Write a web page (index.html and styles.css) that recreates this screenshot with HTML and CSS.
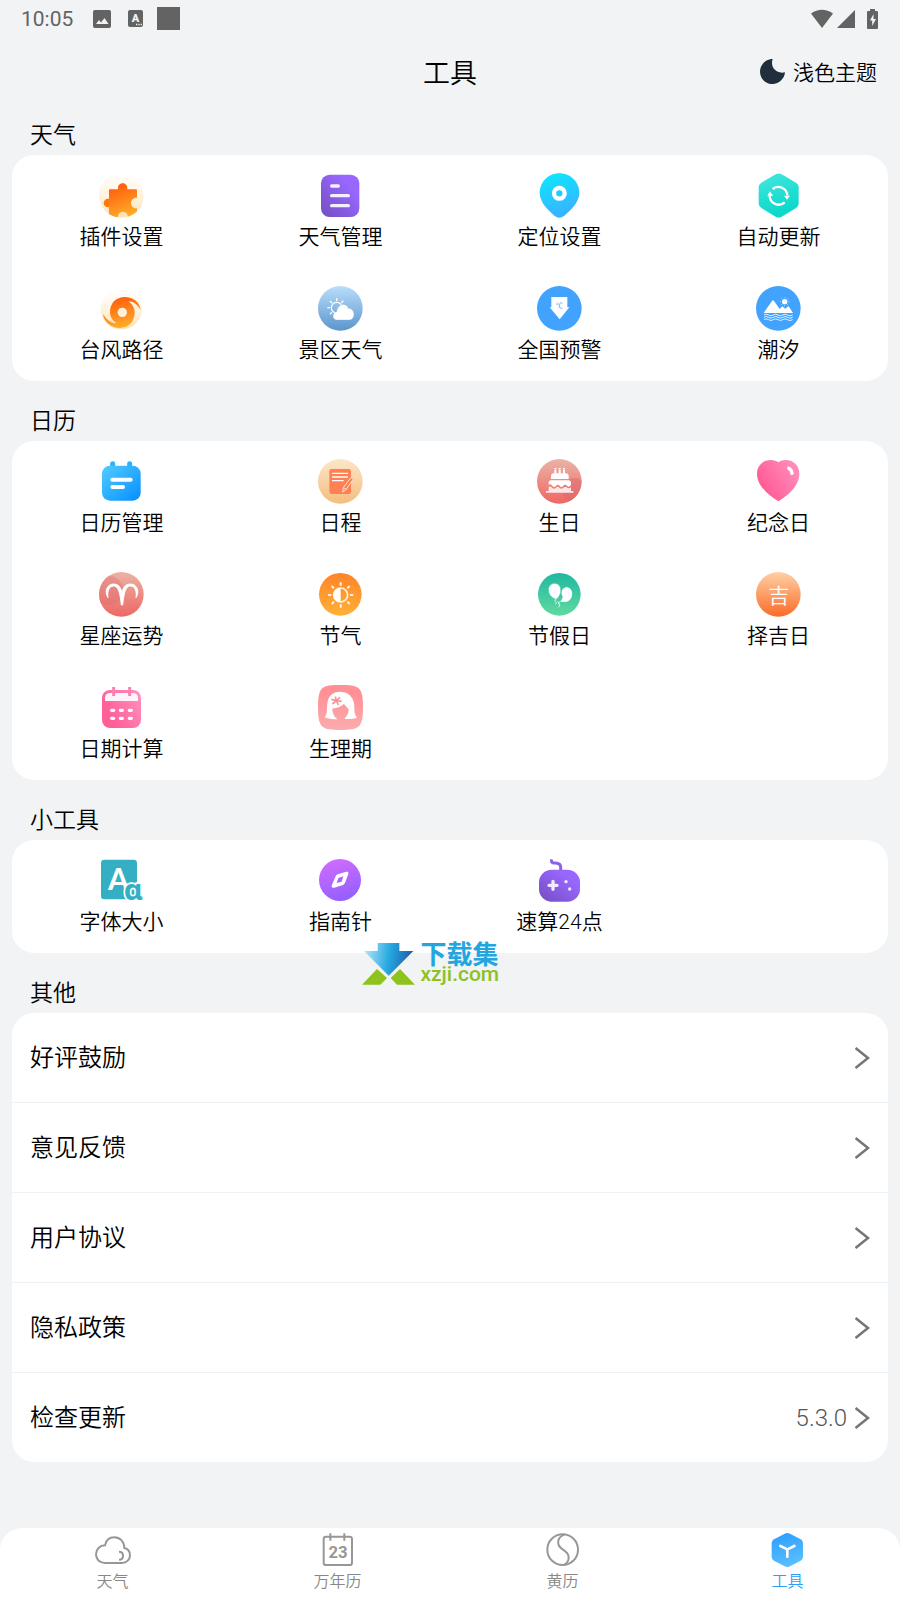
FILE: index.html
```html
<!DOCTYPE html>
<html lang="zh-CN">

<head>
  <meta charset="UTF-8">
  <meta name="viewport" content="width=device-width, initial-scale=1.0">
  <title>工具</title>
  <link rel="stylesheet" href="styles.css">
</head>
<body>
  <div class="status-bar">
    <span class="time">10:05</span>
    <svg class="status-image" width="18" height="18" viewBox="0 0 18 18"><rect width="18" height="18" rx="2" fill="#636363"/><path d="M3 14l3-4 2 2.500 3.500-4.500 4 6z" fill="#f1f3f5"/></svg>
    <svg class="status-lang" width="15" height="17" viewBox="0 0 15 17"><rect width="15" height="17" rx="2" fill="#636363"/><text x="7.500" y="12" class="lang-letter">A</text><path d="M8 14.500h6" stroke="#f1f3f5" stroke-width="1.300" stroke-dasharray="1.300 1"/></svg>
    <span class="status-square"></span>
    <span class="status-right">
      <svg width="22" height="20" viewBox="0 0 22 20"><path d="M0 4.500Q11-3 22 4.500L11 19z" fill="#636363"/></svg>
      <svg width="18" height="20" viewBox="0 0 18 20"><path d="M18 1v18H0z" fill="#636363"/></svg>
      <svg class="battery" width="11" height="20" viewBox="0 0 11 20"><path d="M3 0h5v2h2q1 0 1 1v16q0 1-1 1H1q-1 0-1-1V3q0-1 1-1h2z" fill="#636363"/><path d="M6.500 5L3 11.500h2.200V17L9 10H6.500z" fill="#f1f3f5"/></svg>
    </span>
  </div>

  <header class="header">
    <h1>工具</h1>
    <button class="theme">
      <svg width="25" height="25" viewBox="0 0 75 75"><path d="M38 0C30 22 46 46 75 40C73 60 57 75 38 75C16 75 0 58 0 38C0 17 17 0 38 0z" fill="#212f3d"/></svg>
      浅色主题
    </button>
  </header>

  <main>
    <h2>天气</h2>
    <div class="card grid">
      <button class="tool">
        <svg viewBox="0 0 135 135">
          <defs>
            <linearGradient id="cream" x1="0" y1="0" x2="0" y2="1"><stop offset="0" stop-color="#fff"/><stop offset=".5" stop-color="#fff3e0"/><stop offset="1" stop-color="#fde2b4"/></linearGradient>
            <linearGradient id="orange" x1=".3" y1="0" x2=".6" y2="1"><stop offset="0" stop-color="#ff5a0c"/><stop offset="1" stop-color="#ffb02a"/></linearGradient>
            <clipPath id="round"><circle cx="67" cy="67" r="67"/></clipPath>
          </defs>
          <circle cx="67" cy="67" r="67" fill="url(#cream)"/>
          <g clip-path="url(#round)">
            <circle cx="27" cy="90" r="13" fill="#ff780c"/>
            <path d="M33 49H57V44C57 26 85 26 85 44V49H111Q114 49 114 52V74C90 74 90 106 114 106V135H87C87 110 56 110 56 135H30V52Q30 49 33 49z" fill="url(#orange)"/>
          </g>
        </svg>
        <span>插件设置</span>
      </button>
      <button class="tool">
        <svg viewBox="0 0 135 135">
          <linearGradient id="violet" x1="0" y1="1" x2="1" y2="0"><stop offset="0" stop-color="#734dc0"/><stop offset=".75" stop-color="#9967ff"/></linearGradient>
          <rect x="9" y="5" width="115" height="127" rx="26" fill="url(#violet)"/>
          <path d="M41 39H61M41 68H91M41 98H91" stroke="#f3effd" stroke-width="10" stroke-linecap="round"/>
        </svg>
        <span>天气管理</span>
      </button>
      <button class="tool">
        <svg viewBox="0 0 135 135">
          <linearGradient id="pin" x1="0" y1="0" x2=".3" y2="1"><stop offset="0" stop-color="#0ceaff"/><stop offset="1" stop-color="#37b4ff"/></linearGradient>
          <path d="M67 1C100 1 127 27 127 60C127 88 98 115 82 128Q67 140 52 128C36 115 8 88 8 60C8 27 34 1 67 1z" fill="url(#pin)"/>
          <circle cx="67" cy="61" r="16" fill="none" stroke="#fff" stroke-width="13"/>
        </svg>
        <span>定位设置</span>
      </button>
      <button class="tool">
        <svg viewBox="0 0 135 135">
          <linearGradient id="mint" x1="0" y1="0" x2=".3" y2="1"><stop offset="0" stop-color="#44e7e0"/><stop offset="1" stop-color="#0cd7c9"/></linearGradient>
          <path d="M59 4Q68-1 77 4L120 29Q128 34 128 43V91Q128 100 120 105L77 131Q68 136 59 131L16 105Q8 100 8 91V43Q8 34 16 29z" fill="url(#mint)"/>
          <path d="M50 48A27 27 0 0 1 94 67M86 88A27 27 0 0 1 41 69" fill="none" stroke="#fff" stroke-width="7"/>
          <path d="M84 68H102L93 80zM34 68H52L41 55z" fill="#fff"/>
        </svg>
        <span>自动更新</span>
      </button>
      <button class="tool">
        <svg viewBox="0 0 135 135">
          <ellipse cx="67" cy="70" rx="62" ry="60" fill="url(#cream)"/>
          <path d="M33 79C33 52 50 33 78 33C102 33 122 48 125 72C115 56 103 46 88 46C100 54 107 66 107 79C107 106 90 126 62 126C38 126 14 108 12 84C22 102 38 112 53 112C40 104 33 92 33 79z" fill="url(#orange)"/>
          <circle cx="70" cy="79" r="14" fill="#fff0dc"/>
        </svg>
        <span>台风路径</span>
      </button>
      <button class="tool">
        <svg viewBox="0 0 135 135">
          <linearGradient id="sky" x1="0" y1="0" x2="0" y2="1"><stop offset="0" stop-color="#b9defc"/><stop offset="1" stop-color="#5c95cd"/></linearGradient>
          <circle cx="67" cy="67" r="67" fill="url(#sky)"/>
          <circle cx="56" cy="65" r="16" fill="none" stroke="#fff" stroke-width="4"/>
          <path d="M56 45V37M70 51L76 44M42 51L36 45M36 65H28M42 79L36 85" stroke="#fff" stroke-width="4"/>
          <path d="M58 102C40 102 42 78 56 77C58 54 86 48 91 67C112 66 114 102 94 102z" fill="#fff" stroke="#79abd8" stroke-width="1"/>
        </svg>
        <span>景区天气</span>
      </button>
      <button class="tool">
        <svg viewBox="0 0 135 135">
          <circle cx="67" cy="67" r="67" fill="#42a3ff"/>
          <path d="M43 33H91V64H97L68 100L38 64H43z" fill="#fff"/>
          <text x="67" y="66" class="celsius">℃</text>
        </svg>
        <span>全国预警</span>
      </button>
      <button class="tool">
        <svg viewBox="0 0 135 135">
          <circle cx="67" cy="67" r="67" fill="#42a3ff"/>
          <path d="M23 81L48 45Q51 41 54 45L71 69L79 61L87 68L98 61L111 81z" fill="#fff"/>
          <circle cx="86" cy="47" r="8" fill="#fff"/>
          <circle cx="86" cy="47" r="13" fill="none" stroke="#fff" stroke-width="3" stroke-dasharray="2 8"/>
          <path d="M24 87q7-5 14 0t14 0t14 0t14 0t14 0t16 0M24 94q7-5 14 0t14 0t14 0t14 0t14 0t16 0M24 101q7-5 14 0t14 0t14 0t14 0t14 0t16 0" fill="none" stroke="#e3f1ff" stroke-width="3"/>
        </svg>
        <span>潮汐</span>
      </button>
    </div>

    <h2>日历</h2>
    <div class="card grid">
      <button class="tool">
        <svg viewBox="0 0 135 135">
          <linearGradient id="blue" x1="0" y1="0" x2="1" y2="1"><stop offset="0" stop-color="#52cdff"/><stop offset="1" stop-color="#058eff"/></linearGradient>
          <path d="M41 14V30M92 14V30" stroke="#2fb0ff" stroke-width="15" stroke-linecap="round"/>
          <rect x="9" y="20" width="116" height="105" rx="24" fill="url(#blue)"/>
          <path d="M40 62H95M40 84H72" stroke="#fff" stroke-width="12" stroke-linecap="round"/>
        </svg>
        <span>日历管理</span>
      </button>
      <button class="tool">
        <svg viewBox="0 0 135 135">
          <linearGradient id="sand" x1="0" y1="0" x2="0" y2="1"><stop offset="0" stop-color="#fde6c8"/><stop offset="1" stop-color="#f4bd7f"/></linearGradient>
          <circle cx="67" cy="67" r="67" fill="url(#sand)"/>
          <rect x="34" y="30" width="65" height="75" rx="7" fill="#ff8052"/>
          <path d="M42 43H90M42 54H90M42 65H77" stroke="#fff" stroke-width="4"/>
          <path d="M74 99L76 86L98 57Q103 54 106 60L85 91zM76 86L85 91" fill="#ff8052" stroke="#ffe4d2" stroke-width="3"/>
        </svg>
        <span>日程</span>
      </button>
      <button class="tool">
        <svg viewBox="0 0 135 135">
          <linearGradient id="rose" x1="0" y1="0" x2="0" y2="1"><stop offset="0" stop-color="#ebb3a5"/><stop offset="1" stop-color="#ee6764"/></linearGradient>
          <circle cx="67" cy="67" r="67" fill="url(#rose)"/>
          <circle cx="112" cy="94" r="37" fill="#dc666b" opacity=".45" clip-path="url(#round)"/>
          <path d="M55 27V44M68 27V44M81 27V44" stroke="#fff" stroke-width="6" stroke-dasharray="4 1 20"/>
          <path d="M42 60V52Q42 43 51 43H86Q95 43 95 52V60zM35 77V72Q35 64 43 64H94Q102 64 102 72V77Q96 87 90 80Q84 74 79 80Q74 88 68 80Q62 74 57 80Q52 88 46 80Q40 74 35 77z" fill="#fff"/>
          <path d="M35 84Q40 80 45 86Q52 93 59 85Q62 81 67 86Q74 93 81 85Q84 81 89 85Q96 91 102 84V96H109V101H27V96H35z" fill="#ffe8e8"/>
        </svg>
        <span>生日</span>
      </button>
      <button class="tool">
        <svg viewBox="0 0 135 135">
          <linearGradient id="pink" x1="0" y1=".8" x2="1" y2=".2"><stop offset=".2" stop-color="#ff5f97"/><stop offset="1" stop-color="#ff90bf"/></linearGradient>
          <path d="M67 10C90-6 130 6 130 44C130 84 90 112 67 127C44 112 3 84 3 44C3 6 44-6 67 10z" fill="url(#pink)"/>
          <path d="M98 28Q107 32 108 43" fill="none" stroke="#fff" stroke-width="10" stroke-linecap="round"/>
        </svg>
        <span>纪念日</span>
      </button>
      <button class="tool">
        <svg viewBox="0 0 135 135">
          <circle cx="67" cy="67" r="67" fill="url(#rose)"/>
          <circle cx="28" cy="55" r="44" fill="#dd6a6c" opacity=".35" clip-path="url(#round)"/>
          <path d="M27 77C15 58 24 36 44 36C62 36 68 52 69 66C70 52 76 36 94 36C114 36 123 58 111 77C114 58 108 42 94 42C80 42 75 62 71 99H67C63 62 58 42 44 42C30 42 24 58 27 77z" fill="#fff" stroke="#fff" stroke-width="3" stroke-linejoin="round"/>
        </svg>
        <span>星座运势</span>
      </button>
      <button class="tool">
        <svg viewBox="0 0 135 135">
          <linearGradient id="amber" x1="0" y1="0" x2="0" y2="1"><stop offset="0" stop-color="#ff842a"/><stop offset="1" stop-color="#ffb036"/></linearGradient>
          <circle cx="67" cy="67" r="64" fill="url(#amber)"/>
          <circle cx="68" cy="69" r="21" fill="none" stroke="#fff3e0" stroke-width="5"/>
          <path d="M68 48A21 21 0 0 0 68 90z" fill="#fff"/>
          <path d="M68 41V31M68 97V107M40 69H30M96 69H106M48 49L41 42M88 49L95 42M48 89L41 96M88 89L95 96" stroke="#fff3e0" stroke-width="6"/>
        </svg>
        <span>节气</span>
      </button>
      <button class="tool">
        <svg viewBox="0 0 135 135">
          <linearGradient id="green" x1="0" y1="0" x2="0" y2="1"><stop offset="0" stop-color="#20b8a2"/><stop offset="1" stop-color="#5fda9f"/></linearGradient>
          <circle cx="67" cy="67" r="64" fill="url(#green)"/>
          <path d="M72 89C71 82 82 80 74 67C72 52 82 45 91 46C103 49 109 62 104 75C98 90 84 92 72 89z" fill="#fff"/>
          <path d="M53 34C66 34 74 47 71 61C69 72 62 79 57 83L53 80C43 77 34 66 34 53C35 41 43 34 53 34z" fill="#fff" stroke="#3cc5a1" stroke-width="2"/>
          <path d="M55 82L54 88L58 92L56 97M71 88L64 93L69 99L64 106M62 88L66 97" fill="none" stroke="#dff7ee" stroke-width="3"/>
        </svg>
        <span>节假日</span>
      </button>
      <button class="tool">
        <svg viewBox="0 0 135 135">
          <linearGradient id="peach" x1="0" y1="0" x2="0" y2="1"><stop offset="0" stop-color="#ffd0a5"/><stop offset="1" stop-color="#fb6b28"/></linearGradient>
          <circle cx="67" cy="67" r="67" fill="url(#peach)"/>
          <text x="68" y="93" class="lucky">吉</text>
        </svg>
        <span>择吉日</span>
      </button>
      <button class="tool">
        <svg viewBox="0 0 135 135">
          <rect x="9" y="15" width="117" height="114" rx="24" fill="url(#pink)"/>
          <path d="M18 48V40Q18 24 34 24H101Q117 24 117 40V48z" fill="#fff4f9"/>
          <path d="M44 6V33M92 6V33" stroke="#ff7eb0" stroke-width="9"/>
          <path d="M38 76H44M64 76H70M91 76H97M38 100H44M64 100H70M91 100H97" stroke="#fff" stroke-width="10" stroke-linecap="round"/>
        </svg>
        <span>日期计算</span>
      </button>
      <button class="tool">
        <svg viewBox="0 0 135 135">
          <linearGradient id="blush" x1="0" y1="0" x2="0" y2="1"><stop offset=".2" stop-color="#ff9196"/><stop offset="1" stop-color="#fcacae"/></linearGradient>
          <path d="M67 0C122 0 135 4 135 67S122 135 67 135S0 130 0 67S12 0 67 0z" fill="url(#blush)"/>
          <path d="M20 97C30 86 25 67 29 49C34 28 49 20 66 20C88 20 104 33 108 55C111 73 106 84 117 98Q106 103 79 102C88 92 93 82 92 73L78 57Q64 69 43 71C43 84 47 93 58 103Q34 103 20 97z" fill="#fff"/>
          <path d="M55 47L52 35M55 47L66 37M55 47L71 49M55 47L61 60M55 47L43 57M55 47L40 43" stroke="#ff8e94" stroke-width="5"/>
        </svg>
        <span>生理期</span>
      </button>
    </div>

    <h2>小工具</h2>
    <div class="card grid">
      <button class="tool">
        <svg viewBox="0 0 135 135">
          <rect x="6" y="5" width="108" height="119" rx="10" fill="#35afc4"/>
          <text x="58" y="95" class="font-big">A</text>
          <text x="102" y="127" class="font-small">ɑ</text>
        </svg>
        <span>字体大小</span>
      </button>
      <button class="tool">
        <svg viewBox="0 0 135 135">
          <linearGradient id="purple" x1=".3" y1="0" x2=".6" y2="1"><stop offset="0" stop-color="#d06cff"/><stop offset="1" stop-color="#925fff"/></linearGradient>
          <circle cx="66" cy="66" r="63" fill="url(#purple)"/>
          <path d="M86 44L62 51Q57 52 55 57L44 83Q43 87 48 86L72 79Q76 78 78 74L88 48Q89 43 86 44z" fill="#fff" stroke="#fff" stroke-width="6" stroke-linejoin="round"/>
          <path d="M76 55L61 60L56 75L71 71z" fill="#ad63ff"/>
        </svg>
        <span>指南针</span>
      </button>
      <button class="tool">
        <svg viewBox="0 0 135 135">
          <path d="M44 4Q41 17 55 15Q71 16 71 27V38" fill="none" stroke="#8c60eb" stroke-width="9"/>
          <rect x="6" y="35" width="123" height="96" rx="38" fill="url(#violet)"/>
          <path d="M48 70V94M36 82H60" stroke="#f0eafc" stroke-width="10" stroke-linecap="round"/>
          <circle cx="87" cy="71" r="5" fill="#f0eafc"/><circle cx="98" cy="93" r="5" fill="#f0eafc"/>
        </svg>
        <span>速算24点</span>
      </button>
      <div class="watermark">
        <svg width="53" height="42" viewBox="0 0 159 126">
          <linearGradient id="arrow" x1="0" y1=".4" x2="1" y2=".5"><stop offset="0" stop-color="#b5e4f8"/><stop offset=".5" stop-color="#26a9e1"/><stop offset="1" stop-color="#1e58a8"/></linearGradient>
          <path d="M47 0H112V24H154L80 98L6 24H47z" fill="url(#arrow)"/>
          <path d="M0 125L45 78L75 105L55 125zM159 125L114 78L86 105L105 125z" fill="#8dc21f"/>
        </svg>
        <p><b>下载集</b><span>xzji.com</span></p>
      </div>
    </div>

    <h2>其他</h2>
    <div class="card">
      <a class="row" href="#rate">好评鼓励<svg width="15" height="22" viewBox="0 0 30 44"><path d="M1 2L26 22L1 42"/></svg></a>
      <a class="row" href="#feedback">意见反馈<svg width="15" height="22" viewBox="0 0 30 44"><path d="M1 2L26 22L1 42"/></svg></a>
      <a class="row" href="#terms">用户协议<svg width="15" height="22" viewBox="0 0 30 44"><path d="M1 2L26 22L1 42"/></svg></a>
      <a class="row" href="#privacy">隐私政策<svg width="15" height="22" viewBox="0 0 30 44"><path d="M1 2L26 22L1 42"/></svg></a>
      <a class="row" href="#update">检查更新<span class="version">5.3.0</span><svg width="15" height="22" viewBox="0 0 30 44"><path d="M1 2L26 22L1 42"/></svg></a>
    </div>
  </main>

  <nav class="tabs">
    <a href="#weather">
      <svg viewBox="0 0 108 108"><path class="line" d="M30 93H80C96 93 105 82 105 70C105 58 97 50 88 48C88 28 74 16 58 16C44 16 33 25 30 40C14 40 3 52 3 67C3 82 14 93 30 93zM72 59C88 59 88 83 72 83"/></svg>
      天气
    </a>
    <a href="#calendar">
      <svg viewBox="0 0 108 108"><rect class="line" x="11" y="14" width="85" height="85" rx="7"/><path class="line" d="M31 4V26M73 4V26"/><text x="54" y="78" class="day">23</text></svg>
      万年历
    </a>
    <a href="#almanac">
      <svg viewBox="0 0 108 108"><circle class="line" cx="53" cy="53" r="46"/><path class="line" d="M58 8C36 16 34 38 50 50C66 61 71 66 71 78Q70 92 58 98"/></svg>
      黄历
    </a>
    <a href="#tools" class="active">
      <svg viewBox="0 0 108 108">
        <linearGradient id="tab" x1="0" y1="0" x2=".3" y2="1"><stop offset="0" stop-color="#2b9cff"/><stop offset="1" stop-color="#58bdff"/></linearGradient>
        <path d="M44 5Q52 1 60 5L92 22Q99 27 99 34V74Q99 82 92 86L60 103Q52 107 44 103L12 86Q5 82 5 74V34Q5 27 12 22z" fill="url(#tab)"/>
        <path d="M31 42L52 52L73 42M52 52V74" fill="none" stroke="#fff" stroke-width="8" stroke-linecap="round"/>
      </svg>
      工具
    </a>
  </nav>
</body>
</html>
```
FILE: styles.css
```css
* {
  box-sizing: border-box;
}

body {
  margin: 0;
  min-height: 100vh;
  display: flex;
  flex-direction: column;
  background: #f1f3f5;
  color: #000;
  font-family: Roboto, "Noto Sans CJK SC", sans-serif;
  font-weight: 350;
}

svg {
  display: block;
  flex: none;
}

button {
  border: none;
  background: none;
  padding: 0;
  color: inherit;
  font-family: inherit;
  font-weight: inherit;
  cursor: pointer;
}

a {
  color: inherit;
  text-decoration: none;
}

h1, h2, p {
  margin: 0;
  font-weight: inherit;
}

.status-bar {
  display: flex;
  align-items: center;
  height: 37px;
  padding: 0 22px 0 21px;
  color: #636363;
}

.time {
  font-size: 21px;
  font-weight: 400;
}

.status-image {
  margin-left: 20px;
}

.status-lang {
  margin-left: 17px;
}

.lang-letter {
  font-size: 11px;
  font-weight: 900;
  fill: #f1f3f5;
  text-anchor: middle;
}

.status-square {
  width: 23px;
  height: 23px;
  margin-left: 14px;
  background: #636363;
}

.status-right {
  display: flex;
  gap: 4px;
  margin-left: auto;
}

.battery {
  margin-left: 8px;
}

.header {
  display: grid;
  grid-template-columns: 1fr auto 1fr;
  align-items: center;
  height: 68px;
  padding: 0 23px;
}

.header h1 {
  grid-column: 2;
  font-size: 27px;
}

.theme {
  display: flex;
  align-items: center;
  justify-self: end;
  gap: 8px;
  font-size: 21px;
}

main {
  padding: 0 12px;
}

h2 {
  padding: 22px 18px 0;
  font-size: 23px;
  line-height: 38px;
}

main h2:first-child {
  padding-top: 12px;
}

.card {
  position: relative;
  background: #fff;
  border-radius: 22px;
}

.grid {
  display: grid;
  grid-template-columns: repeat(4, 1fr);
}

.tool {
  display: flex;
  flex-direction: column;
  align-items: center;
  gap: 4px;
  padding: 18px 0 16px;
  font-size: 21px;
  line-height: 30px;
}

.tool svg {
  width: 45px;
  height: 45px;
  overflow: visible;
}

.celsius {
  font-size: 22px;
  font-weight: 400;
  fill: #42a3ff;
  text-anchor: middle;
}

.lucky {
  font-size: 63px;
  fill: #fff;
  text-anchor: middle;
}

.font-big {
  font-family: Lato, sans-serif;
  font-size: 90px;
  font-weight: 700;
  fill: #fff;
  text-anchor: middle;
}

.font-small {
  font-family: "Noto Sans", sans-serif;
  font-size: 88px;
  font-weight: 700;
  fill: #35afc4;
  stroke: #fff;
  stroke-width: 10px;
  paint-order: stroke;
  text-anchor: middle;
}

/* sits over the edge of the card */
.watermark {
  position: absolute;
  top: 103px;
  left: 40%;
  display: flex;
  gap: 5px;
}

.watermark b, .watermark span {
  display: block;
}

.watermark b {
  font-size: 26px;
  font-weight: 700;
  line-height: 25px;
  color: #22a6df;
}

.watermark span {
  font-size: 21px;
  font-weight: 500;
  line-height: 12px;
  color: #8dc21f;
}

.row {
  display: flex;
  align-items: center;
  gap: 8px;
  height: 90px;
  padding: 0 18px;
  border-bottom: 1px solid #eff2f3;
  font-size: 24px;
  line-height: 30px;
}

.row:last-child {
  height: 89px;
  border-bottom: none;
}

.row svg {
  margin-left: auto;
  fill: none;
  stroke: #767676;
  stroke-width: 5px;
}

.version {
  margin-left: auto;
  color: #555;
}

.version + svg {
  margin-left: 0;
}

.tabs {
  display: grid;
  grid-template-columns: repeat(4, 1fr);
  height: 72px;
  margin-top: auto;
  background: #fff;
  border-radius: 22px 22px 0 0;
}

.tabs a {
  display: flex;
  flex-direction: column;
  align-items: center;
  padding-top: 4px;
  font-size: 16px;
  line-height: 28px;
  color: #888;
}

.tabs svg {
  width: 36px;
  height: 36px;
}

.tabs .active {
  color: #2e9dfb;
}

.line {
  fill: none;
  stroke: #979797;
  stroke-width: 6px;
}

.day {
  font-size: 50px;
  font-weight: 700;
  fill: #979797;
  text-anchor: middle;
}
```
